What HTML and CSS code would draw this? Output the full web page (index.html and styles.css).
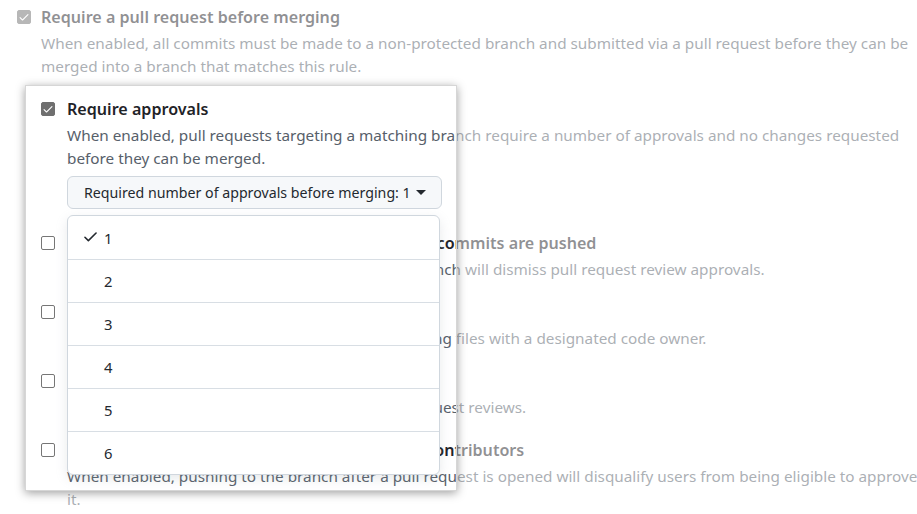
FILE: index.html
```html
<!DOCTYPE html>
<html lang="en">
<head>
<meta charset="utf-8">
<title>Branch protection rule</title>
<link rel="stylesheet" href="styles.css">
</head>
<body>
<div class="page">
  <div class="opt opt-top">
    <span class="cb checked"><svg viewBox="0 0 16 16" width="12" height="12"><path d="M13.78 4.22a.75.75 0 0 1 0 1.06l-7.25 7.25a.75.75 0 0 1-1.06 0L2.22 9.28a.751.751 0 0 1 1.06-1.06L6 10.94l6.72-6.720a.75.75 0 0 1 1.06 0Z"/></svg></span>
    <div class="body">
      <div class="title">Require a pull request before merging</div>
      <p class="desc">When enabled, all commits must be made to a non-protected branch and submitted via a pull request before they can be<br>merged into a branch that matches this rule.</p>
    </div>
  </div>

  <div class="nested">
    <div class="opt">
      <span class="cb checked"><svg viewBox="0 0 16 16" width="12" height="12"><path d="M13.78 4.22a.75.75 0 0 1 0 1.06l-7.25 7.25a.75.75 0 0 1-1.06 0L2.22 9.28a.751.751 0 0 1 1.06-1.06L6 10.94l6.72-6.72a.75.75 0 0 1 1.06 0Z"/></svg></span>
      <div class="body">
        <div class="title">Require approvals</div>
        <p class="desc">When enabled, pull requests targeting a matching branch require a number of approvals and no changes requested<br>before they can be merged.</p>
        <div class="select">
          <button class="select-btn" type="button">Required number of approvals before merging: 1 <span class="caret"></span></button>
          <ul class="menu">
            <li class="item"><svg class="check" viewBox="0 0 16 16" width="17" height="17"><path d="M13.78 4.22a.75.75 0 0 1 0 1.06l-7.25 7.25a.75.75 0 0 1-1.06 0L2.22 9.28a.751.751 0 0 1 1.06-1.06L6 10.94l6.72-6.72a.75.75 0 0 1 1.06 0Z"/></svg><span>1</span></li>
            <li class="item"><span>2</span></li>
            <li class="item"><span>3</span></li>
            <li class="item"><span>4</span></li>
            <li class="item"><span>5</span></li>
            <li class="item"><span>6</span></li>
          </ul>
        </div>
      </div>
    </div>

    <div class="opt">
      <span class="cb"></span>
      <div class="body">
        <div class="title">Dismiss stale pull request approvals when new commits are pushed</div>
        <p class="desc">New reviewable commits pushed to a matching branch will dismiss pull request review approvals.</p>
      </div>
    </div>

    <div class="opt">
      <span class="cb"></span>
      <div class="body">
        <div class="title">Require review from Code Owners</div>
        <p class="desc">Require an approved review in pull requests including files with a designated code owner.</p>
      </div>
    </div>

    <div class="opt">
      <span class="cb"></span>
      <div class="body">
        <div class="title">Restrict who can dismiss pull request reviews</div>
        <p class="desc">Specify people or teams allowed to dismiss pull request reviews.</p>
      </div>
    </div>

    <div class="opt">
      <span class="cb"></span>
      <div class="body">
        <div class="title">Ignore approvals from all pull request branch contributors</div>
        <p class="desc">When enabled, pushing to the branch after a pull request is opened will disqualify users from being eligible to approve<br>it.</p>
      </div>
    </div>
  </div>

  <div class="spot"></div>
</div>
</body>
</html>
```

FILE: styles.css
```css
* { box-sizing: border-box; }
html, body { margin: 0; padding: 0; background: #fff; }
body {
  font-family: "Noto Sans", "Open Sans", "Liberation Sans", sans-serif;
  color: #24292f;
  overflow: hidden;
}
.page {
  position: relative;
  width: 917px;
  height: 514px;
  padding-top: 5px;
}
.opt {
  display: flex;
  align-items: flex-start;
  gap: 12px;
}
.opt-top {
  padding-left: 17px;
  gap: 10px;
}
.nested {
  padding-left: 41px;
  margin-top: 19px;
  display: flex;
  flex-direction: column;
  gap: 19px;
}
.body { flex: 1; min-width: 0; }
.title {
  font-size: 16.1px;
  font-weight: 600;
  line-height: 24px;
  white-space: nowrap;
  color: #1f2328;
}
.desc {
  margin: 3px 0 0;
  font-size: 15.3px;
  line-height: 23px;
  color: #57606a;
  white-space: nowrap;
}
.cb {
  flex: none;
  width: 14px;
  height: 14px;
  margin-top: 5px;
  border: 1px solid #767676;
  border-radius: 2px;
  background: #fff;
  display: flex;
  align-items: center;
  justify-content: center;
}
.cb.checked {
  background: #6f6f6f;
  border-color: #6f6f6f;
}
.cb svg { fill: #fff; }
.select {
  position: relative;
  margin-top: 6px;
  margin-bottom: 3px;
  width: 375px;
}
.select-btn {
  width: 100%;
  height: 33px;
  display: flex;
  align-items: center;
  padding: 0 0 0 16px;
  font-family: inherit;
  font-size: 14.2px;
  color: #24292f;
  background: #f6f8fa;
  border: 1px solid #d0d7de;
  border-radius: 6px;
  white-space: nowrap;
}
.caret {
  display: inline-block;
  margin-left: 5px;
  width: 0;
  height: 0;
  border-left: 5px solid transparent;
  border-right: 5px solid transparent;
  border-top: 5px solid #24292f;
}
.menu {
  position: absolute;
  z-index: 2;
  left: 0;
  top: 39px;
  width: 373px;
  margin: 0;
  padding: 0;
  list-style: none;
  background: #fff;
  border: 1px solid #d0d7de;
  border-radius: 6px;
  box-shadow: 0 4px 12px rgba(140, 149, 159, 0.2);
  overflow: hidden;
}
.item {
  position: relative;
  height: 43px;
  display: flex;
  align-items: center;
  padding-left: 36px;
  font-size: 14.8px;
  color: #24292f;
  border-top: 1px solid #d8dee4;
}
.item:first-child { border-top: 0; }
.check {
  position: absolute;
  left: 14px;
  top: 12px;
  fill: #24292f;
}
.spot {
  position: absolute;
  z-index: 1;
  left: 25px;
  top: 85px;
  width: 432px;
  height: 406px;
  border: 1px solid #d6d6d6;
  pointer-events: none;
  box-shadow: 0 2px 9px rgba(0, 0, 0, 0.38), 0 0 0 2000px rgba(255, 255, 255, 0.5);
}
```
